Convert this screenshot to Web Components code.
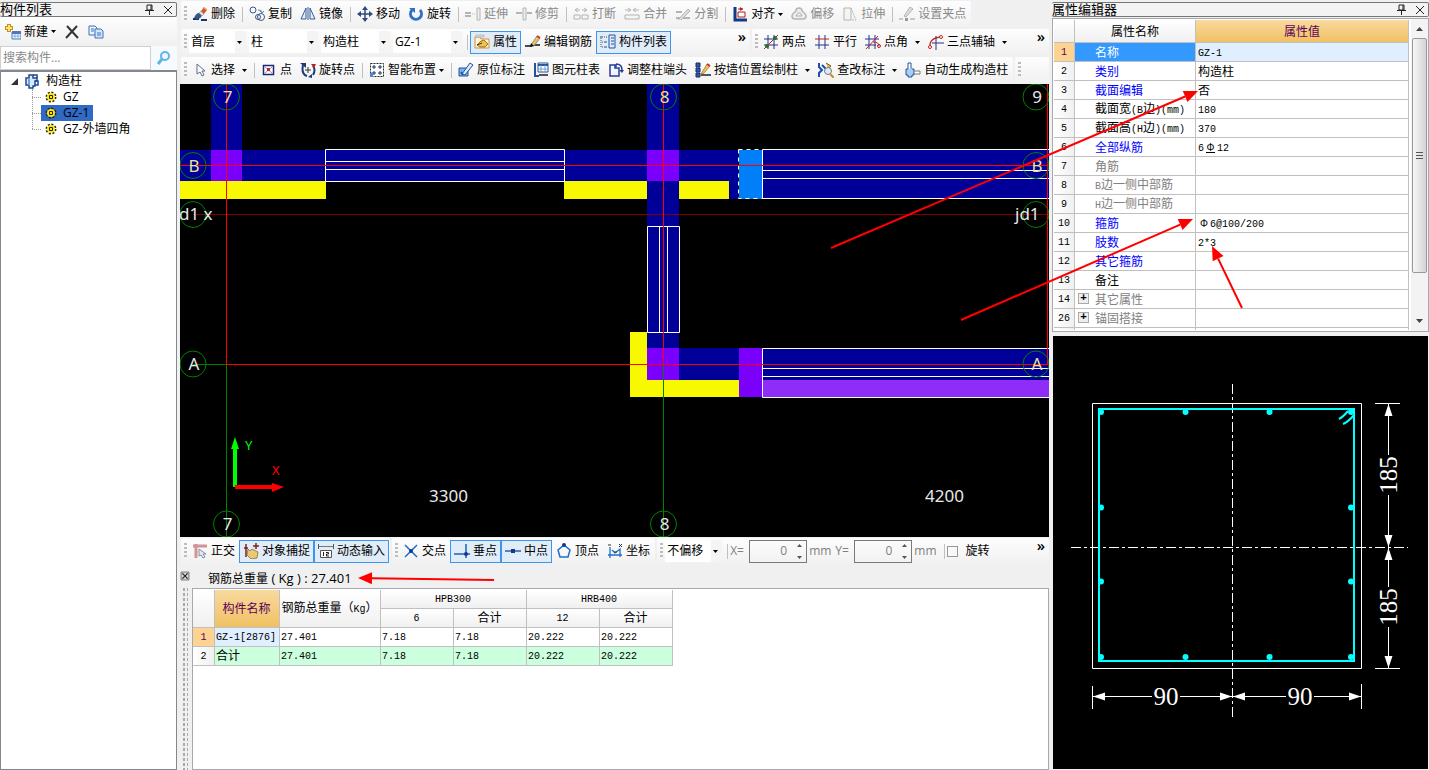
<!DOCTYPE html>
<html lang="zh-CN">
<head>
<meta charset="utf-8">
<title>构件属性编辑</title>
<style>
html,body{margin:0;padding:0}
body{background:#f0f0f0;color:#000;font:12px/16px "Open Sans","Noto Sans CJK SC",sans-serif}
</style>
</head>
<body>
<app-shell></app-shell>
<script>
/* ---------- shared helpers ---------- */
const define = (name, html, setup) => {
  const t = document.createElement('template');
  t.innerHTML = html;
  customElements.define(name, class extends HTMLElement {
    constructor() { super(); this.attachShadow({mode: 'open'}); }
    connectedCallback() {
      if (this.shadowRoot.childNodes.length) return;
      this.shadowRoot.append(t.content.cloneNode(true));
      if (setup) setup(this, this.shadowRoot);
    }
  });
};
/* Latin runs inside the grids use a half-width face beside the full-width Chinese */
const mixed = s => s.replace(/[\x21-\x7e]+/g, m => `<span class="m">${m}</span>`);
const MONO = '.m{font:10px/14px "Liberation Mono",monospace}';

/* ---------- icons, 16 x 16 ---------- */
const N = '#1f3c78', G = '#b4b4b4';
const ICONS = {
  erase: `<path d="M1 13h6M9 14h6" stroke="#1d3565" stroke-width="2"/><path d="M2 12q2-5 5-5l3 2q-1 4-5 4z" fill="#30588f"/><path d="M7 7l3 3 2-2-3-3z" fill="#d8dde8" stroke="#777" stroke-width=".5"/><path d="M9 5l3 3 3-4-3-3z" fill="#d8552f"/><path d="M12 1l3 2-1 1-3-2z" fill="#f0a080"/>`,
  copy: `<g fill="none" stroke="#3b5a86"><circle cx="4" cy="4" r="3"/><circle cx="12" cy="11" r="3.5"/><circle cx="9" cy="11" r="2.5"/><path d="M9 4q4 0 4 2M11 5l2 2 2-2" stroke="#6a86ad"/></g>`,
  mirror: `<path d="M6 2v11H1zM10 2v11h5z" fill="#e3ecf8" stroke="#375f9a"/><path d="M8 1v13" stroke="#375f9a"/>`,
  move: `<path d="M8 2v12M2 8h12" stroke="#2c4a7c" stroke-width="1.5"/><path d="M8 0l3 4H5zM8 16l3-4H5zM0 8l4-3v6zM16 8l-4-3v6z" fill="#2c4a7c"/>`,
  rotate: `<path d="M4 4a5.500 5.500 0 1 0 8 0" fill="none" stroke="#2f6fc4" stroke-width="3"/><path d="M1 2h6v5z" fill="#2f6fc4"/>`,
  extend: `<path d="M0 7h6M0 10h6" stroke="${G}" stroke-width="2"/><path d="M7 8h4" stroke="${G}" stroke-dasharray="1 1"/><path d="M12 2h3v12h-3z" fill="#eee" stroke="${G}"/>`,
  trim: `<path d="M0 7h6M11 7h5" stroke="${G}" stroke-width="2"/><path d="M7 2h3v12H7z" fill="#eee" stroke="${G}"/>`,
  brk: `<g fill="none" stroke="${G}"><path d="M5 2L2 4l3 2M2 4h5M11 2l3 2-3 2M14 4H9"/><path d="M1 9h6v4H1zM9 9h6v4H9z"/></g>`,
  merge: `<g fill="none" stroke="${G}"><path d="M4 2l3 2-3 2M1 4h6M12 2L9 4l3 2M15 4H9"/><path d="M1 9h14v4H1z"/></g>`,
  split: `<path d="M1 12h14M1 6h6" stroke="${G}" stroke-width="2"/><path d="M3 14L13 3l2 2-9 9" fill="#ddd" stroke="${G}"/>`,
  align: `<path d="M3 1v13h12" fill="none" stroke="#123a86" stroke-width="3"/><path d="M6 3h5M6 6h7v5H6z" stroke="#b11c1c" fill="#fff"/><path d="M11 3L8 1v4z" fill="#b11c1c"/>`,
  offset: `<path d="M5 5a3 3 0 0 1 6 0q4 3 4 5 0 3-3 3H4q-3 0-3-3 0-2 4-5z" fill="#eee" stroke="${G}" stroke-width="1.500"/><path d="M6 8q2-3 4 0l1 2H5z" fill="none" stroke="${G}"/>`,
  stretch: `<path d="M2 2h7v12H2z" fill="#f5f5f5" stroke="${G}"/><path d="M9 2l5 12H9" fill="none" stroke="${G}" stroke-dasharray="2 1"/>`,
  grip: `<path d="M0 13h4M11 13h5" stroke="#999" stroke-width="1"/><path d="M6 12h3v3H6z" fill="#999"/><path d="M5 10l6-9 3 2-7 8z" fill="#ddd" stroke="${G}"/>`,
  attr: `<path d="M1 3h5l1 2h8v9H1z" fill="#fff3d0" stroke="#d98f35"/><path d="M2 1h8v2H2z" fill="#ddd" stroke="#999" stroke-width=".5"/><path d="M3 11l4-4 3-1 4 4-3 3H6z" fill="#f0c04a" stroke="#6b5210" stroke-width=".7"/><path d="M3 11l5-2" stroke="#333"/>`,
  editbar: `<path d="M0 12h6l2-1 7 0" fill="none" stroke="#111" stroke-width="1.500"/><path d="M6 11l6-9 3 2-6 8z" fill="#e8c560" stroke="#555" stroke-width=".6"/><path d="M12 2l3 2" stroke="#c33" stroke-width="2"/><path d="M5 13l1-4 3 3z" fill="#111"/>`,
  list: `<path d="M9 1h6v13H9z" fill="#dce9fa" stroke="#24549c"/><path d="M11 4h3M11 7h3M11 10h3" stroke="#24549c"/><path d="M1 2v11M2 3h6M2 8h6M2 13h6" stroke="#555" stroke-dasharray="1 1"/><path d="M0 2h3v2H0zM4 7h3v2H4zM4 12h3v2H4z" fill="#7d9cc8"/>`,
  twopt: `<path d="M5 1v14M11 1v14M1 5h14M1 11h14" stroke="#26338f"/><path d="M1 15L15 1" stroke="#c42020"/><circle cx="4" cy="12" r="2" fill="#2b6d2b"/><circle cx="12" cy="4" r="2" fill="#2b6d2b"/>`,
  parallel: `<path d="M5 1v14M11 1v14" stroke="#26338f"/><path d="M1 5h14" stroke="#c42020"/><path d="M1 11h14" stroke="#26338f"/>`,
  ptangle: `<path d="M4 1v14M10 1v14M0 5h14M0 11h11" stroke="#26338f"/><path d="M1 15L13 2M8 8q6 0 6 4" stroke="#c42020" fill="none"/><circle cx="14" cy="12" r="1.500" fill="none" stroke="#c42020"/>`,
  threept: `<path d="M8 2v14M4 9h12" stroke="#26338f"/><path d="M2 13q-1-9 11-10" fill="none" stroke="#c42020" stroke-width="1.300"/><circle cx="2" cy="13" r="1.500" fill="#fff" stroke="#c42020"/><circle cx="13" cy="3" r="1.500" fill="#fff" stroke="#c42020"/>`,
  select: `<path d="M5 2v10l3-2 2 4 2-1-2-4h3z" fill="#fff" stroke="#5b6d8c"/>`,
  point: `<path d="M2.500 3.500h10v9h-10z" fill="#fff" stroke="#1d2670" stroke-width="1.500"/><path d="M4 5l7 6M11 5l-7 6" stroke="#8a93c8"/><path d="M6 6h3v3H6z" fill="#d02020"/>`,
  rotpt: `<path d="M3 3Q1 12 7 14M13 13q3-5 0-9" fill="none" stroke="#1d3b78" stroke-width="2"/><path d="M0 1h6v5z" fill="#1d3b78"/><path d="M8 15l4-3v4z" fill="#1d3b78"/><path d="M11 2l5 0-2 4z" fill="#b82020"/><path d="M8 5v6M5 8h6" stroke="#333"/>`,
  smart: `<path d="M1.500 1.500h13v13h-13z" fill="#fff" stroke="#222" stroke-dasharray="2 1"/><path d="M5 3v4M3 5h4M11 3v4M9 5h4M5 9v4M3 11h4M11 9v4M9 11h4" stroke="#16325f"/><path d="M1 11l3-1v5H1z" fill="#4d8ad4"/>`,
  note: `<path d="M1 6h9v8H1z" fill="#7fb0e8" stroke="#24549c"/><path d="M4 12L12 1l3 2-8 10z" fill="#dbe9fa" stroke="#24549c"/><path d="M3 10l2 3" stroke="#24549c" stroke-width="2"/>`,
  coltab: `<path d="M2 1v13h4" fill="none" stroke="#24549c" stroke-width="2"/><path d="M5 1h10v9H5z" fill="#fff" stroke="#24549c"/><path d="M5 2h10v2H5z" fill="#24549c"/><path d="M5 7h10M8 3v7M12 3v7" stroke="#7a9ccb"/><path d="M6 13h9" stroke="#555" stroke-width="2"/>`,
  colend: `<path d="M2 3h5v3h4v8H2z" fill="#f2f7ff" stroke="#243f96" stroke-width="1.500"/><path d="M8 2q6 0 6 6M8 2v3" fill="none" stroke="#243f96" stroke-width="1.500"/><path d="M11 8h5l-2 3z" fill="#243f96"/>`,
  bywall: `<path d="M1 1h4v4H1zM1 6h4v4H1zM1 11h4v4H1z" fill="#2f56a8" stroke="#14306e"/><path d="M6 13h10" stroke="#222" stroke-width="1.500"/><path d="M6 12l6-10 3 2-7 8z" fill="#f0c255" stroke="#7a5c18" stroke-width=".6"/><path d="M12 2l3 2" stroke="#c33" stroke-width="2"/>`,
  check: `<path d="M1 1v4l3 3-3 3v4M4 3l5 5" fill="none" stroke="#1d4bb0" stroke-width="2"/><path d="M8 1l5 3-3 3" fill="#e2b84c" stroke="#7a5c18"/><circle cx="10" cy="9" r="3.500" fill="#dceaf8" stroke="#777"/><path d="M12 12l4 4" stroke="#c4902c" stroke-width="2"/>`,
  autogen: `<path d="M3 1h3v7H3z" fill="#fff" stroke="#24549c"/><path d="M3 7H1v6h2v2h4v-2h2V7H7" fill="#a9cdf3" stroke="#24549c"/><path d="M9 9h6v3H9z" fill="#fff" stroke="#777"/>`,
  ortho: `<path d="M1 3h14M4 1v14" stroke="#d09494" stroke-width="3"/><path d="M7 6v7l2-1 2 3 2-1-2-3h3z" fill="#e4e9f1" stroke="#8090a8"/>`,
  osnap: `<path d="M3 1v13M13 0v6M1 5h4M10 3h6" stroke="#7c2222" stroke-width="1.500"/><path d="M5 6l2 2 2-2 6 3-1 6-6 1-4-4z" fill="#ecc777" stroke="#7d6320" stroke-width=".7"/>`,
  dyn: `<path d="M0 3.500h16" stroke="#777"/><path d="M.5 6V1M15.500 6V1" stroke="#555"/><path d="M2.500 7.500h11v7h-11z" fill="#fff" stroke="#555"/><path d="M5.500 9v4M8 9.500h2.500v1.500H8.500v2H11" fill="none" stroke="#222"/>`,
  cross: `<path d="M2 2l12 12M14 2L2 14" stroke="#1f6fc6" stroke-width="1.500"/><circle cx="8" cy="8" r="2" fill="#123a86"/>`,
  perp: `<path d="M0 11h16M12 1v14" stroke="#1f5fb6" stroke-width="1.500"/><circle cx="12" cy="11" r="2" fill="#123a86"/>`,
  mid: `<path d="M0 8h16" stroke="#1f5fb6" stroke-width="1.500"/><path d="M6 6h4v4H6z" fill="#123a86"/>`,
  vertex: `<path d="M8 2l6 5-2 7H4L2 7z" fill="none" stroke="#1f6fc6" stroke-width="1.500"/><circle cx="8" cy="2" r="2" fill="#123a86"/>`,
  coord: `<path d="M3 4v11M1 12h14M5 7l3 3 5-4v8" fill="none" stroke="#1f6fc6" stroke-width="1.300"/><path d="M1 2h3M12 1l3 3M15 1l-3 3M7 9h3" stroke="#333"/>`,
  newc: `<path d="M4 0v8M0 4h8" stroke="#c58f1c" stroke-width="4"/><path d="M4 1v6M1 4h6" stroke="#ffe27a" stroke-width="2"/><path d="M7 8h9v7H7z" fill="#eef5ff" stroke="#4b78b8"/><path d="M7 7h9v3H7z" fill="#4b78b8"/><path d="M7 12h9M10 10v5M13 10v5" stroke="#8fb0d8"/>`,
  del: `<path d="M3 2l11 12M13 2L2 14" stroke="#333" stroke-width="2"/>`,
  dup: `<path d="M1 2h6l2 2v7H1z" fill="#eaf3fd" stroke="#3c72b8"/><path d="M7 5h6l2 2v7H7z" fill="#d5e6fa" stroke="#3c72b8"/><path d="M3 5h3M3 7h3M9 9h4M9 11h4" stroke="#3c72b8"/>`,
  search: `<circle cx="9" cy="6" r="4" fill="#eef8ff" stroke="#5fb4ea" stroke-width="2"/><path d="M6 9l-4 5" stroke="#5fb4ea" stroke-width="3"/>`,
  folder: `<path d="M5 2h4v3h4v3h-2v5h-2v2H5v-3H2V5h3z" fill="#dbe9fa" stroke="#1e4a92" stroke-width="1.500"/><path d="M9 2h4v3M11 8h3v4h-3" fill="none" stroke="#1e4a92" stroke-width="1.500"/><path d="M5 5v7" stroke="#6fa3dd" stroke-width="2"/>`,
  gear: `<circle cx="8" cy="8" r="4.500" fill="none" stroke="#222" stroke-width="2" stroke-dasharray="2 1.500"/><circle cx="8" cy="8" r="4" fill="#ffe800"/><path d="M6.500 6.500h3v3h-3z" fill="none" stroke="#222"/>`,
  pin: `<path d="M5 3h5v5H5zM3 8.500h9M7.500 9v4M9 3v5" fill="none" stroke="#222"/>`,
  close: `<path d="M4 4l8 8M12 4l-8 8" stroke="#222"/>`,
  closebox: `<path d="M3.500 3.500h9v9h-9z" fill="#ddd" stroke="#666"/><path d="M5 5l6 6M11 5l-6 6" stroke="#222" stroke-width="1.500"/>`
};
const ico = n => `<svg class="i" width="16" height="16" viewBox="0 0 16 16" fill="none" aria-hidden="true">${ICONS[n]}</svg>`;
const caret = `<svg width="5" height="3" viewBox="0 0 5 3" aria-hidden="true"><path d="M0 0h5L2.500 3z" fill="currentColor"/></svg>`;

/* ---------- toolbar parts ---------- */
define('tool-bar', `<style>
:host{display:flex;align-items:center;height:26px;padding:0 1px 0 3px;background:linear-gradient(#fdfdfd,#f1f1f1);border-radius:2px}
.g{width:3px;height:16px;margin-right:1px;flex:none;background:repeating-linear-gradient(#bdbdbd 0 2px,transparent 2px 4px)}
</style><span class="g"></span><slot></slot>`);

define('tool-button', `<style>
:host{display:block;flex:none}
button{box-sizing:border-box;display:flex;align-items:center;gap:3px;height:23px;margin:0;padding:0 3px;border:1px solid transparent;background:none;font:inherit;color:#000;white-space:nowrap}
.i{flex:none}
:host([on]) button{background:#e1ecf9;border-color:#3d95ee}
button:disabled{color:#8a8a8a}
.split{margin-left:4px}
</style><button type="button"><slot></slot></button>`, (h, r) => {
  const b = r.querySelector('button');
  b.insertAdjacentHTML('afterbegin', ico(h.getAttribute('icon')));
  if (h.hasAttribute('off')) b.disabled = true;
  if (h.hasAttribute('menu')) {
    b.insertAdjacentHTML('beforeend', caret);
    if (h.getAttribute('menu') === 'split') b.lastElementChild.classList.add('split');
  }
  if (h.hasAttribute('on')) b.setAttribute('aria-pressed', 'true');
});

define('tool-sep', `<style>:host{display:block;flex:none;width:1px;height:15px;margin:0 2px 0 3px;background:#c0c0c0}</style>`);

define('tool-combo', `<style>
:host{display:block;flex:none;position:relative;width:69px;height:22px;margin:0 2px 0 1px;background:#fff}
:host([short]){width:57px}
select{appearance:none;box-sizing:border-box;width:100%;height:22px;margin:0;padding:0 12px 0 2px;border:0;border-radius:0;color:#000;font:inherit;background:linear-gradient(90deg,#f4f4f4,#f4f4f4) right/11px 100% no-repeat #fff}
svg{position:absolute;right:4px;top:10px}
</style><select></select>${caret}`, (h, r) => {
  const s = r.querySelector('select');
  s.add(new Option(h.getAttribute('value')));
  s.setAttribute('aria-label', h.getAttribute('label'));
});

define('tool-more', `<style>
:host{display:block;margin-left:auto;align-self:flex-start}
button{margin:0;padding:0 3px;border:0;background:none;font:600 15px/14px "Open Sans",sans-serif;color:#000}
</style><button type="button" aria-label="更多">»</button>`);

define('tool-spin', `<style>
:host{display:flex;align-items:center;flex:none;color:#808080;gap:3px}
label{min-width:16px}
.b{box-sizing:border-box;position:relative;display:flex;width:58px;height:23px;border:1px solid #7a7a7a}
input{box-sizing:border-box;width:100%;min-width:0;margin:0;padding:0 19px 0 0;border:0;background:none;text-align:right;font:inherit;color:#808080;appearance:textfield}
input::-webkit-inner-spin-button{appearance:none}
svg{position:absolute;right:4px;top:3px}
.u{margin:0 4px 0 -1px}
</style><label for="v"></label><span class="b"><input id="v" type="number" value="0"><svg width="5" height="15" viewBox="0 0 5 15"><path d="M0 3h5L2.500 0zM0 12h5l-2.500 3z" fill="#555"/></svg></span><span class="u">mm</span>`,
(h, r) => { r.querySelector('label').textContent = h.getAttribute('label'); });

define('tool-check', `<style>
:host{display:flex;align-items:center}
label{display:flex;align-items:center;gap:8px}
input{appearance:none;box-sizing:border-box;width:11px;height:11px;margin:0;border:1px solid #999;background:#f8f8f8}
</style><label><input type="checkbox"><slot></slot></label>`);

define('main-toolbars', `<style>
:host{display:flex;flex-direction:column;gap:2px;padding:1px 0 1px 1px}
.r{display:flex;gap:2px}
.grow{flex:1}
.axis{flex:0 0 297px}
.r tool-bar{box-sizing:border-box}
</style>
<div class="r"><tool-bar>
<tool-button icon="erase">删除</tool-button><tool-sep></tool-sep>
<tool-button icon="copy">复制</tool-button><tool-button icon="mirror">镜像</tool-button><tool-sep></tool-sep>
<tool-button icon="move">移动</tool-button><tool-button icon="rotate">旋转</tool-button><tool-sep></tool-sep>
<tool-button icon="extend" off>延伸</tool-button><tool-button icon="trim" off>修剪</tool-button><tool-sep></tool-sep>
<tool-button icon="brk" off>打断</tool-button><tool-button icon="merge" off>合并</tool-button><tool-button icon="split" off>分割</tool-button><tool-sep></tool-sep>
<tool-button icon="align" menu>对齐</tool-button><tool-button icon="offset" off>偏移</tool-button><tool-button icon="stretch" off>拉伸</tool-button><tool-sep></tool-sep>
<tool-button icon="grip" off>设置夹点</tool-button>
</tool-bar></div>
<div class="r"><tool-bar class="grow">
<tool-combo short value="首层" label="楼层"></tool-combo><tool-combo value="柱" label="构件类型"></tool-combo><tool-combo value="构造柱" label="构件类别"></tool-combo><tool-combo value="GZ-1" label="构件"></tool-combo><tool-sep></tool-sep>
<tool-button icon="attr" on>属性</tool-button><tool-button icon="editbar">编辑钢筋</tool-button><tool-button icon="list" on>构件列表</tool-button><tool-more></tool-more>
</tool-bar><tool-bar class="axis">
<tool-button icon="twopt">两点</tool-button><tool-button icon="parallel">平行</tool-button><tool-button icon="ptangle" menu="split">点角</tool-button><tool-button icon="threept" menu="split">三点辅轴</tool-button><tool-more></tool-more>
</tool-bar></div>
<div class="r"><tool-bar>
<tool-button icon="select" menu="split">选择</tool-button><tool-sep></tool-sep>
<tool-button icon="point">点</tool-button><tool-button icon="rotpt">旋转点</tool-button><tool-sep></tool-sep>
<tool-button icon="smart" menu>智能布置</tool-button><tool-sep></tool-sep>
<tool-button icon="note">原位标注</tool-button><tool-button icon="coltab">图元柱表</tool-button><tool-button icon="colend">调整柱端头</tool-button><tool-button icon="bywall" menu="split">按墙位置绘制柱</tool-button><tool-button icon="check" menu="split">查改标注</tool-button><tool-button icon="autogen">自动生成构造柱</tool-button>
</tool-bar><tool-bar class="grow"></tool-bar></div>`);

define('snap-toolbar', `<style>
:host{display:flex;gap:2px;padding:1px 0 1px 1px}
.grow{flex:1}
</style>
<tool-bar><tool-button icon="ortho">正交</tool-button><tool-button icon="osnap" on>对象捕捉</tool-button><tool-button icon="dyn" on>动态输入</tool-button></tool-bar>
<tool-bar><tool-button icon="cross">交点</tool-button><tool-button icon="perp" on>垂点</tool-button><tool-button icon="mid" on>中点</tool-button><tool-button icon="vertex">顶点</tool-button><tool-button icon="coord">坐标</tool-button></tool-bar>
<tool-bar class="grow"><tool-combo short value="不偏移" label="偏移方式"></tool-combo><tool-sep></tool-sep><tool-spin label="X="></tool-spin><tool-spin label="Y="></tool-spin><tool-sep></tool-sep><tool-check>旋转</tool-check><tool-more></tool-more></tool-bar>`);

/* ---------- docked panels ---------- */
define('dock-title', `<style>
:host{box-sizing:border-box;display:flex;align-items:center;height:15px;border:1px solid #777;border-left-width:0;border-radius:2px;font-size:13px;background:#f3f3f3}
b{flex:1;font-weight:normal;line-height:13px}
button{display:flex;margin:0 2px 0 0;padding:0;border:0;background:none;height:13px;align-items:center}
button:last-child{margin-right:0}
</style><b><slot></slot></b><button type="button" aria-label="固定">${ico('pin')}</button><button type="button" aria-label="关闭">${ico('close')}</button>`);

define('component-list', `<style>
:host{display:flex;flex-direction:column;padding-top:2px}
.bar{display:flex;align-items:center;height:29px;background:linear-gradient(#fdfdfd,#f0f0f0)}
.bar button{display:flex;align-items:center;gap:3px;margin:0;padding:0 3px 0 5px;border:0;background:none;font:inherit;height:23px;color:#000}
form{display:flex;height:24px;margin:0}
input{flex:1;min-width:0;box-sizing:border-box;margin:0;padding:0 2px;border:1px solid #d0d0d0;background:#fff;font:inherit}
input::placeholder{color:#8a8a8a;opacity:1}
form button{display:flex;align-items:center;justify-content:center;width:26px;margin:0;padding:0;border:0;background:#f6fafd}
.tree{flex:1;background:#fff;border:1px solid #828790;border-top-width:2px;padding-top:1px}
ul{list-style:none;margin:0;padding:0}
li{display:flex;align-items:center;height:16px}
li.group{display:block;height:auto}
.root{padding-left:10px;gap:6px}
.kids{margin-left:31px;position:relative}
.kids::before{content:"";position:absolute;left:0;top:0;height:40px;border-left:1px dotted #999}
.kids li::before{content:"";width:9px;border-top:1px dotted #999}
.kids span.t{display:flex;align-items:center;height:16px;gap:4px;padding:0 4px 0 2px}
.kids .sel{background:#316ac5}
.tri{width:7px;height:7px}
</style>
<dock-title>构件列表</dock-title>
<div class="bar"><button type="button">${ico('newc')}新建${caret}</button><button type="button" aria-label="删除">${ico('del')}</button><button type="button" aria-label="复制">${ico('dup')}</button></div>
<form><input type="search" placeholder="搜索构件..." aria-label="搜索构件"><button type="button" aria-label="搜索">${ico('search')}</button></form>
<div class="tree"><ul>
<li class="root"><svg class="tri" viewBox="0 0 7 7"><path d="M7 0v7H0z" fill="#333"/></svg>${ico('folder')}<span>构造柱</span></li>
<li class="group"><ul class="kids">
<li><span class="t">${ico('gear')}GZ</span></li>
<li><span class="t sel">${ico('gear')}GZ-1</span></li>
<li><span class="t">${ico('gear')}GZ-外墙四角</span></li>
</ul></li></ul></div>`);

const PROPS = [
  ['1','名称','GZ-1','sel'],['2','类别','构造柱','b'],['3','截面编辑','否','b'],
  ['4','截面宽(B边)(mm)','180',''],['5','截面高(H边)(mm)','370',''],['6','全部纵筋','6<u>Φ</u>12','b'],
  ['7','角筋','','g'],['8','B边一侧中部筋','','g'],['9','H边一侧中部筋','','g'],
  ['10','箍筋','<i>Φ</i>6@100/200','b'],['11','肢数','2*3','b'],['12','其它箍筋','','b'],['13','备注','',''],
  ['14','其它属性','','g x'],['26','锚固搭接','','g x'],['','','','']];
define('property-editor', `<style>
:host{display:block;padding-top:2px}
.w{box-sizing:border-box;display:flex;height:314px;margin-top:1px;border:1px solid #a8a8b0;background:#fff;overflow:hidden;padding-left:1px}
.c{flex:1;min-width:0;height:310px;overflow:hidden;padding-top:1px}
table{border-collapse:separate;border-spacing:0;table-layout:fixed;width:calc(100% - 2px)}
td,th{box-sizing:border-box;height:19px;padding:1px 2px 0;border-right:1px solid #c0c0c0;border-bottom:1px solid #c0c0c0;font-weight:normal;line-height:14px;white-space:nowrap;text-align:left;overflow:hidden}
thead th{height:23px;text-align:center;background:linear-gradient(#fff,#f0f0f0)}
thead .v{background:linear-gradient(#f9d99f,#f0c163);color:#5b0059}
.n{padding:0;text-align:center;background:linear-gradient(90deg,#fff,#f0f0f0)}
.p{padding-left:20px;position:relative}
.b .p{color:#00f}
.g .p{color:#808080}
.sel .n{background:#fdd391;color:#5b0059}
.sel .p{background:#3399ff;color:#fff}
.sel .v{background:#e0efff}
.x .p::before{content:"+";position:absolute;left:3px;top:3px;box-sizing:border-box;width:11px;height:11px;border:1px solid #aaa;background:#eee;color:#000;font:bold 11px/9px "Liberation Mono",monospace;text-align:center}
u{text-decoration:none;display:inline-block;width:9px;margin:0 2px;border-bottom:1px solid #000;line-height:9px;font:10px/9px "Liberation Sans",sans-serif;text-align:center}
i{font:10px/10px "Liberation Sans",sans-serif;margin:0 2px}
.s{width:17px;display:flex;flex-direction:column;align-items:center;background:#f3f3f3;color:#444}
.s svg{margin:8px 0 7px}
.th{box-sizing:border-box;width:15px;flex:0 0 235px;border:1px solid #999;border-radius:2px;background:linear-gradient(90deg,#f6f6f6,#d4d4d8);display:flex;align-items:center;justify-content:center}
.th::before{content:"";width:7px;height:8px;background:repeating-linear-gradient(#555 0 1px,transparent 1px 3px)}
.s .dn{margin:auto 0 8px}
${MONO}
</style>
<dock-title>属性编辑器</dock-title>
<div class="w"><div class="c"><table>
<colgroup><col style="width:21px"><col style="width:121px"><col></colgroup>
<thead><tr><th></th><th>属性名称</th><th class="v">属性值</th></tr></thead><tbody></tbody></table></div>
<div class="s"><svg width="7" height="4" viewBox="0 0 7 4"><path d="M0 4h7L3.500 0z" fill="currentColor"/></svg><div class="th"></div><svg class="dn" width="7" height="4" viewBox="0 0 7 4"><path d="M0 0h7L3.500 4z" fill="currentColor"/></svg></div></div>`,
(h, r) => {
  r.querySelector('tbody').innerHTML = PROPS.map(([n, p, v, c]) =>
    `<tr class="${c}"><th class="n" scope="row"><span class="m">${n}</span></th><td class="p">${mixed(p)}</td><td class="v">${/[^\x00-\x7fΦ]/.test(v) ? v : `<span class="m">${v}</span>`}</td></tr>`).join('');
});

define('weight-report', `<style>
:host{display:flex;flex:1;min-height:0}
.side{width:12px;display:flex;flex-direction:column}
.side button{display:flex;margin:3px 0 0 -2px;padding:0;border:0;background:none}
.side div{flex:1;margin:3px 4px 0 2px;background:radial-gradient(#aaa 1px,transparent 1px) 0 0/4px 5px}
.main{flex:1;min-width:0;display:flex;flex-direction:column}
p{margin:0;height:23px;line-height:26px;padding-left:16px}
p span{font-size:13px}
.box{box-sizing:border-box;flex:1;border:1px solid #a8a8b0;background:#fff;padding-top:1px}
table{border-collapse:separate;border-spacing:0;table-layout:fixed;width:480px}
td,th{box-sizing:border-box;height:19px;padding:0 2px 0 1px;border-right:1px solid #c0c0c0;border-bottom:1px solid #c0c0c0;font-weight:normal;line-height:14px;white-space:nowrap;text-align:left}
thead th{text-align:center;background:linear-gradient(#fff,#f0f0f0)}
thead .o{background:linear-gradient(#f9d99f,#f0c163);color:#5b0059}
.n{padding:0;text-align:center;background:linear-gradient(90deg,#fff,#f0f0f0)}
.cur .n{background:#fdd391;color:#5b0059}
.cur .k{background:#e0efff}
.sum td{background:#ccffdd}
${MONO}
</style>
<div class="side"><button type="button" aria-label="关闭">${ico('closebox')}</button><div></div></div>
<div class="main"><p>钢筋总重量<span> ( Kg ) : 27.401</span></p>
<div class="box"><table>
<colgroup><col style="width:22px"><col style="width:65px"><col style="width:101px"><col style="width:73px"><col style="width:73px"><col style="width:73px"><col style="width:73px"></colgroup>
<thead><tr><th rowspan="2"></th><th rowspan="2" class="o">构件名称</th><th rowspan="2">钢筋总重量（<span class="m">Kg</span>）</th><th colspan="2"><span class="m">HPB300</span></th><th colspan="2"><span class="m">HRB400</span></th></tr>
<tr><th><span class="m">6</span></th><th>合计</th><th><span class="m">12</span></th><th>合计</th></tr></thead><tbody></tbody></table></div></div>`,
(h, r) => {
  r.querySelector('tbody').innerHTML = [
    ['cur','1','GZ-1[2876]','27.401','7.18','7.18','20.222','20.222'],
    ['sum','2','合计','27.401','7.18','7.18','20.222','20.222']
  ].map(([c, n, k, ...v]) => `<tr class="${c}"><th class="n" scope="row"><span class="m">${n}</span></th><td class="k">${mixed(k)}</td>${v.map(x => `<td>${mixed(x)}</td>`).join('')}</tr>`).join('');
});

/* ---------- plan drawing ---------- */
const bubble = (x, y, t, c = '#e8e8e8') => `<circle cx="${x}" cy="${y}" r="13" fill="none" stroke="#008000"/><text x="${x + 1}" y="${y + 6}" text-anchor="middle" fill="${c}">${t}</text>`;
define('plan-canvas', `<style>
:host{display:block;background:#000}
svg{display:block;width:100%;height:auto}
text{font:17px "Noto Sans",sans-serif}
.ax{font:13px "Noto Sans",sans-serif}
</style>
<svg viewBox="180 84 869 453">
<path fill="#000099" d="M211 84h31v66h-31zM180 150h558v31H180zM647 84h32v296h-32zM729 150h9v49h-9zM679 348h60v32h-60zM762 150h287v48H762zM762 348h287v32H762z"/>
<path fill="#7b00fb" d="M211 150h31v31h-31zM647 150h32v31h-32zM647 348h32v32h-32zM739 348h23v49h-23z"/>
<path fill="#8f2cf8" d="M762 380h287v17H762z"/>
<path fill="#f8f800" d="M180 181h146v18H180zM564 181h83v18h-83zM679 181h50v18h-50zM630 332h17v48h92v17H630z"/>
<path fill="#007ff8" d="M739 150h23v49h-23z"/>
<path fill="none" stroke="#fff" d="M325.500 149.500h239v32h-239zM325.500 161.500h239M325.500 169.500h239M647.500 226.500h32v106h-32zM659.500 226v106M667.500 226v106M1049 149.500H762.500v49H1049M762 170.500h287M762 178.500h287M1049 348.500H762.500v49H1049M762 368.500h287M762 376.500h287"/>
<path fill="none" stroke="#fff" stroke-dasharray="4 4" d="M738.500 149.500h24M738.500 149.500v49h24"/>
<path stroke="#008000" d="M226.500 364v173M663.500 364v173M193 364.500h33"/>
<path stroke="#800000" d="M193 214.500h856"/>
<path stroke="#f00" d="M180 165.500h869M226.500 84v280M663.500 84v280M1047.500 84v280M226 364.500h823"/>
${bubble(226.5, 97, '7', '#e6e690')}${bubble(663.5, 97, '8', '#e6e690')}${bubble(1036, 97, '9')}
${bubble(193, 165.5, 'B', '#e6e690')}${bubble(1036, 165.5, 'B', '#e6e690')}
${bubble(193, 364, 'A')}${bubble(1036, 364, 'A', '#e6e690')}
${bubble(226.5, 524, '7')}${bubble(663.5, 524, '8')}
<g fill="none" stroke="#008000"><circle cx="193" cy="214.500" r="13"/><circle cx="1036" cy="214.500" r="13"/></g>
<g fill="#e8e8e8"><text x="179" y="220">d1 x</text><text x="1015" y="220">jd1</text><text x="429" y="502">3300</text><text x="925" y="502">4200</text></g>
<path fill="#0f0" d="M233 487v-38h-2l4-12 4 12h-2v38z"/>
<path fill="#f00" d="M235 485h37v-2l12 4-12 5v-3h-37z"/>
<text class="ax" x="245" y="450" fill="#0f0">Y</text><text class="ax" x="272" y="475" fill="#f00">X</text>
</svg>`);

/* ---------- column section drawing ---------- */
const tip = (x, y, dx, dy) => `M${x} ${y}L${x + dx * 12 + dy * 4} ${y + dy * 12 + dx * 4}L${x + dx * 12 - dy * 4} ${y + dy * 12 - dx * 4}z`;
const bars = [[1101,412],[1185.5,412],[1269.5,412],[1351,412],[1101,507.5],[1351,507.5],[1101,581.5],[1351,581.5],[1101,657],[1185.5,657],[1269.5,657],[1351,657]];
define('section-view', `<style>
:host{display:block;flex:1;margin:4px 1px 1px;background:#000}
svg{display:block;width:100%;height:auto}
text{font:25px "Liberation Serif",serif;fill:#fff;text-anchor:middle}
</style>
<svg viewBox="1053 336 375 433">
<g fill="none" stroke="#fff"><path d="M1092.500 403.500h269v265h-269z"/>
<path stroke-dasharray="10 3 3 3" d="M1071 547.500h337M1232.500 384v334"/>
<path d="M1092.500 686v23M1361.500 684v25M1375 403.500h25M1375 668.500h25M1093 696.500h59M1180 696.500h106M1314 696.500h47M1388.500 404v51M1388.500 495v92M1388.500 627v41"/></g>
<path fill="#fff" d="${tip(1093,696.5,1,0)}${tip(1232,696.5,-1,0)}${tip(1233,696.5,1,0)}${tip(1361,696.5,-1,0)}${tip(1388.5,404,0,1)}${tip(1388.5,547,0,-1)}${tip(1388.5,548,0,1)}${tip(1388.5,668,0,-1)}"/>
<path fill="none" stroke="#0ff" stroke-width="2" d="M1099 409h255v252h-255zM1339 419q4-2 9-8M1343 424q5-2 11-9"/>
<g fill="#0ff">${bars.map(([x, y]) => `<circle cx="${x}" cy="${y}" r="3"/>`).join('')}</g>
<text x="1166" y="705">90</text><text x="1300" y="705">90</text>
<text transform="translate(1397 475) rotate(-90)">185</text><text transform="translate(1397 607) rotate(-90)">185</text>
</svg>`);

/* ---------- callout arrows laid over the panels ---------- */
const callout = (x1, y1, x2, y2) => {
  const a = Math.atan2(y2 - y1, x2 - x1), c = Math.cos(a), s = Math.sin(a), bx = x2 - 14 * c, by = y2 - 14 * s;
  return `<path d="M${x1} ${y1}L${bx} ${by}" stroke="#f00" stroke-width="2"/><path d="M${x2} ${y2}L${bx - 6 * s} ${by + 6 * c}L${bx + 6 * s} ${by - 6 * c}z" fill="#f00"/>`;
};
define('callout-layer', `<style>
:host{position:absolute;inset:0;pointer-events:none}
svg{display:block;width:100%;height:100%}
</style><svg>${callout(831,248,1198,91)}${callout(961,320,1193,219)}${callout(1242,308,1212,246)}${callout(494,580,358,578)}</svg>`);

define('app-shell', `<style>
:host{position:relative;display:grid;grid-template-columns:177px minmax(0,1fr) 377px;column-gap:3px;min-height:100vh}
main,aside{display:flex;flex-direction:column;min-width:0}
</style>
<component-list></component-list>
<main><main-toolbars></main-toolbars><plan-canvas></plan-canvas><snap-toolbar></snap-toolbar><weight-report></weight-report></main>
<aside><property-editor></property-editor><section-view></section-view></aside>
<callout-layer></callout-layer>`);
</script>
</body>
</html>
